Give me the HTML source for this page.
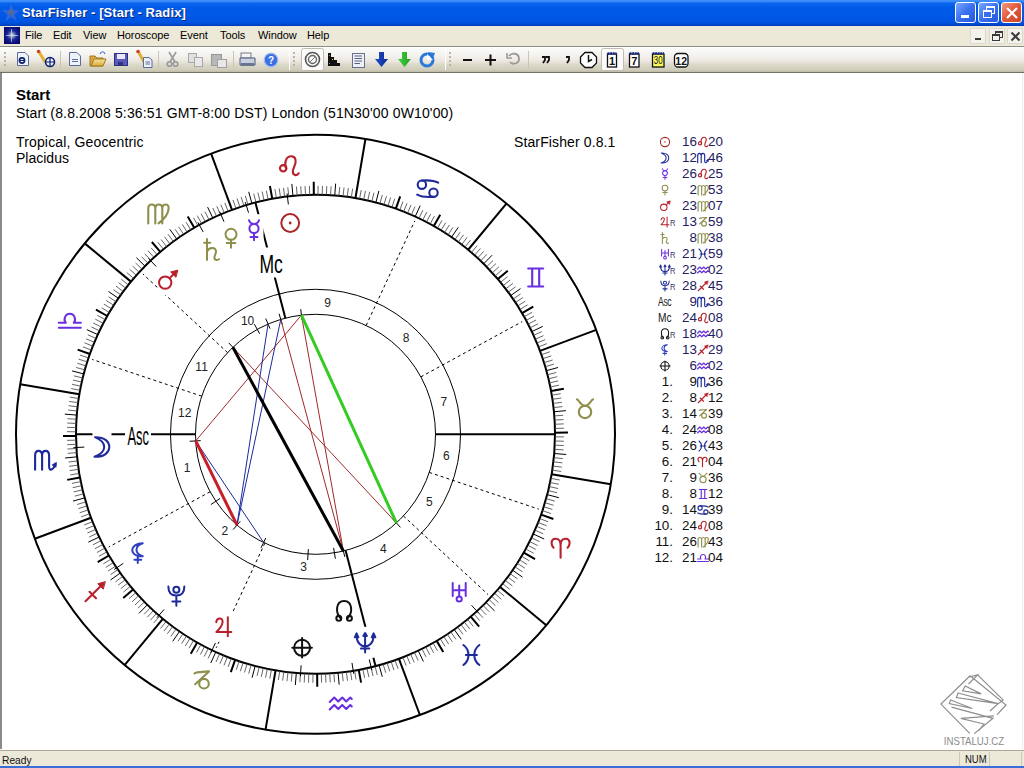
<!DOCTYPE html>
<html><head><meta charset="utf-8">
<style>
*{margin:0;padding:0;box-sizing:border-box}
html,body{width:1024px;height:768px;overflow:hidden;background:#fff;font-family:"Liberation Sans",sans-serif}
.abs{position:absolute}
#title{position:absolute;left:0;top:0;width:1024px;height:26px;background:linear-gradient(#3d8ef8 0%,#3d8ef8 5%,#0a64ee 12%,#005ae8 30%,#0058e6 60%,#0055e2 85%,#0044c8 96%,#0038b0 100%)}
#title .tx{position:absolute;left:22px;top:5px;color:#fff;font-weight:bold;font-size:13px;letter-spacing:0.1px;text-shadow:1px 1px 0 #0a2a80}
.tb{position:absolute;top:2px;width:21px;height:21px;border:1px solid #fff;border-radius:3px;background:linear-gradient(135deg,#7aa8ff,#3a70f0 50%,#2458e0)}
.tb.cl{background:linear-gradient(135deg,#f49a78,#e0583a 50%,#c84828)}
#menu{position:absolute;left:0;top:26px;width:1024px;height:21px;background:#ece9d8;border-bottom:1px solid #fff}
#mline{position:absolute;left:0;top:46px;width:1024px;height:1px;background:#8e8d82}
#menu .m{position:absolute;top:3px;font-size:11px;letter-spacing:-0.1px;color:#000}
#menu .mb{position:absolute;top:1.5px;width:16px;height:16px;background:#f3f2ec;border:1px solid #dcd9cc;border-radius:1px}
#tool{position:absolute;left:0;top:47px;width:1024px;height:26px;border-top:1px solid #fff;border-bottom:1px solid #72725f;background:linear-gradient(#fbfbf9 0%,#f4f3ef 30%,#ece6e0 55%,#d9d7c6 72%,#cfccba 92%,#bdbaa8 100%)}
#client{position:absolute;left:0;top:73px;width:1024px;height:676px;background:#fff;border-left:2px solid #8a8a8a}
#status{position:absolute;left:0;top:750px;width:1024px;height:16px;background:#ece9d8;border-top:1px solid #aca899}
#status .s{position:absolute;top:2px;font-size:11px;line-height:13px;color:#111}
#bottom{position:absolute;left:0;top:766px;width:1024px;height:2px;background:#3a6fd8}
.t{position:absolute;font-size:14px;line-height:16px;white-space:nowrap;color:#000}
.num{color:#1e2060;font-size:13.4px}
.hn{color:#111;font-size:13.4px}
.g{position:absolute;overflow:visible}
.sep{position:absolute;top:5px;width:2px;height:18px;border-left:1px solid #c5c2b2;border-right:1px solid #fff}
.grip{position:absolute;top:5px;width:3px;height:17px;background:repeating-linear-gradient(#c5c2b2 0 2px,transparent 2px 4px)}
</style></head><body>
<div id="title">
 <svg class="abs" style="left:1px;top:2px" width="20" height="20"><path d="M10,1.5 L12.2,8 L19,8.3 L13.6,12.4 L15.6,19 L10,15 L4.4,19 L6.4,12.4 L1,8.3 L7.8,8 Z" fill="#3a6ad8" opacity="0.8"/><circle cx="10" cy="10.5" r="3" fill="#5a6a90" opacity="0.8"/></svg>
 <div class="tx">StarFisher - [Start - Radix]</div>
 <div class="tb" style="left:955px"><div class="abs" style="left:5px;top:12px;width:8px;height:3px;background:#fff"></div></div>
 <div class="tb" style="left:978px"><div class="abs" style="left:7px;top:3px;width:9px;height:8px;border:1px solid #fff;border-top-width:2px"></div><div class="abs" style="left:4px;top:7px;width:9px;height:8px;border:1px solid #fff;border-top-width:2px;background:#3a6ef0"></div></div>
 <div class="tb cl" style="left:1001px"><svg class="abs" style="left:3px;top:3px" width="14" height="14"><path d="M2,2L12,12M12,2L2,12" stroke="#fff" stroke-width="2.2"/></svg></div>
</div>
<div id="menu">
 <div class="abs" style="left:4px;top:1px;width:16px;height:17px;background:radial-gradient(circle at 50% 48%,#fff 0,#9ab 12%,#1a2a98 40%,#0a0a70 75%)"><div class="abs" style="left:7px;top:2px;width:1px;height:13px;background:rgba(200,220,255,0.7)"></div><div class="abs" style="left:2px;top:8px;width:12px;height:1px;background:rgba(200,220,255,0.7)"></div></div>
 <div class="m" style="left:25px">File</div>
 <div class="m" style="left:53px">Edit</div>
 <div class="m" style="left:83px">View</div>
 <div class="m" style="left:117px">Horoscope</div>
 <div class="m" style="left:180px">Event</div>
 <div class="m" style="left:220px">Tools</div>
 <div class="m" style="left:258px">Window</div>
 <div class="m" style="left:307px">Help</div>
 <div class="mb" style="left:970px"><div class="abs" style="left:4px;top:9px;width:6px;height:2px;background:#3a3a3a"></div></div>
 <div class="mb" style="left:988.5px"><div class="abs" style="left:5px;top:2px;width:8px;height:7px;border:1px solid #3a3a3a;border-top-width:2px"></div><div class="abs" style="left:2px;top:5px;width:8px;height:7px;border:1px solid #3a3a3a;border-top-width:2px;background:#f3f2ec"></div></div>
 <div class="mb" style="left:1006.5px"><svg class="abs" style="left:2px;top:2px" width="11" height="11"><path d="M1.5,1.5L9.5,9.5M9.5,1.5L1.5,9.5" stroke="#3a3a3a" stroke-width="2"/></svg></div>
</div>
<div id="mline"></div>
<div id="tool">
<svg class="abs" style="left:0;top:-2px" width="1024" height="26">
<defs>
<linearGradient id="fold" x1="0" y1="0" x2="0" y2="1"><stop offset="0" stop-color="#fbe7a0"/><stop offset="1" stop-color="#d9a83a"/></linearGradient>
<linearGradient id="arrB" x1="0" y1="0" x2="1" y2="0"><stop offset="0" stop-color="#2050c8"/><stop offset="1" stop-color="#0a2a98"/></linearGradient>
<linearGradient id="arrG" x1="0" y1="0" x2="1" y2="0"><stop offset="0" stop-color="#40d040"/><stop offset="1" stop-color="#20a020"/></linearGradient>
</defs>
<!-- grips -->
<g fill="#b8b5a5"><rect x="4" y="6" width="2" height="2"/><rect x="4" y="10" width="2" height="2"/><rect x="4" y="14" width="2" height="2"/><rect x="4" y="18" width="2" height="2"/></g>
<g fill="#b8b5a5"><rect x="293" y="6" width="2" height="2"/><rect x="293" y="10" width="2" height="2"/><rect x="293" y="14" width="2" height="2"/><rect x="293" y="18" width="2" height="2"/></g>
<g fill="#b8b5a5"><rect x="449" y="6" width="2" height="2"/><rect x="449" y="10" width="2" height="2"/><rect x="449" y="14" width="2" height="2"/><rect x="449" y="18" width="2" height="2"/></g>
<line x1="289.5" y1="3" x2="289.5" y2="24" stroke="#fff"/>
<line x1="445.5" y1="3" x2="445.5" y2="24" stroke="#fff"/>
<!-- separators -->
<g stroke="#c8c5b5"><line x1="60.5" y1="5" x2="60.5" y2="22"/><line x1="158.5" y1="5" x2="158.5" y2="22"/><line x1="233.5" y1="5" x2="233.5" y2="22"/><line x1="528.5" y1="5" x2="528.5" y2="22"/></g>
<!-- icon1 new chart doc -->
<path d="M17.5,6.5 H25 L28.5,10 V19.5 H17.5 Z" fill="#eef2fb" stroke="#5a6a9a"/>
<circle cx="22" cy="14.5" r="2.6" fill="none" stroke="#102070" stroke-width="1.6"/><line x1="19.5" y1="14.5" x2="24.5" y2="14.5" stroke="#102070"/>
<!-- icon2 pencil + globe -->
<line x1="38.5" y1="5" x2="45" y2="16" stroke="#e0b030" stroke-width="3"/><circle cx="38.5" cy="5.5" r="1.8" fill="#d04030"/>
<circle cx="50" cy="16" r="4.5" fill="#e8eef8" stroke="#102070" stroke-width="1.6"/><path d="M45.5,16 H54.5 M50,11.5 V20.5" stroke="#102070" stroke-width="1.2"/>
<!-- icon3 doc -->
<path d="M69.5,6.5 H77 L80.5,10 V19.5 H69.5 Z" fill="#eef2fb" stroke="#5a6a9a"/><path d="M72,13.5 H78 M72,15.5 H78" stroke="#5a6a9a"/>
<!-- folder -->
<path d="M90,10 H95 L97,12 H103 V20 H90 Z" fill="#d8a840" stroke="#a07820"/><path d="M91,20 L94,13 H106 L103,20 Z" fill="url(#fold)" stroke="#a07820"/><path d="M100,8 C101,5 104,5 105,8" fill="none" stroke="#4a7ac8" stroke-width="1.2"/>
<!-- floppy -->
<rect x="114.5" y="7.5" width="13" height="12" fill="#5a5ab8" stroke="#303080"/><rect x="117" y="8" width="8" height="5" fill="#e8e8f8"/><rect x="118" y="16" width="5" height="3" fill="#303080"/>
<!-- pencil doc -->
<line x1="138" y1="5" x2="144" y2="16" stroke="#e0b030" stroke-width="3"/><circle cx="138" cy="5.5" r="1.8" fill="#d04030"/>
<path d="M143.5,11.5 H149 L152,14 V21.5 H143.5 Z" fill="#eef2fb" stroke="#5a6a9a"/><path d="M145.5,16 H150 M145.5,18 H150" stroke="#5a6a9a"/>
<!-- scissors grey -->
<path d="M169,6 L175,16 M176,6 L170,16" stroke="#a0a0a0" stroke-width="1.8"/><circle cx="169.5" cy="18" r="2.3" fill="none" stroke="#9a9a9a" stroke-width="1.6"/><circle cx="175.5" cy="18" r="2.3" fill="none" stroke="#9a9a9a" stroke-width="1.6"/>
<!-- copy -->
<rect x="188.5" y="7.5" width="8" height="9" fill="#e0e0e0" stroke="#a8a8a8"/><rect x="194.5" y="11.5" width="8" height="9" fill="#e8e8e8" stroke="#a8a8a8"/>
<!-- paste -->
<rect x="211.5" y="8.5" width="10" height="11" fill="#b8b8b8" stroke="#989898"/><rect x="217.5" y="13.5" width="9" height="8" fill="#e8e8e8" stroke="#a0a0a0"/>
<!-- printer -->
<rect x="241" y="7" width="10" height="5" fill="#f4f4f4" stroke="#707a90"/><path d="M240,12 H255 V19 H240 Z" fill="#c8d0e0" stroke="#505a78"/><rect x="241" y="17" width="13" height="3" fill="#6a7490"/>
<!-- help -->
<circle cx="271" cy="14" r="6.8" fill="#3a70e0" stroke="#a8c0f0" stroke-width="1.2"/><text x="271" y="18" text-anchor="middle" font-family="Liberation Sans" font-weight="bold" font-size="10" fill="#fff">?</text>
<!-- pressed radix -->
<rect x="301.5" y="2.5" width="22" height="22" rx="2" fill="#fbfbfb" stroke="#c0bdb0"/>
<circle cx="312.5" cy="13.5" r="7" fill="none" stroke="#555" stroke-width="1.6"/><circle cx="312.5" cy="13.5" r="4" fill="none" stroke="#666" stroke-width="1.4"/><line x1="310" y1="16" x2="315" y2="11" stroke="#777"/>
<!-- bar chart -->
<g><rect x="328" y="7" width="3" height="13" fill="#101010"/><rect x="331" y="11" width="3" height="9" fill="#101010"/><rect x="334" y="14" width="3" height="6" fill="#101010"/><rect x="337" y="17" width="3" height="3" fill="#101010"/><rect x="329" y="9" width="1" height="1" fill="#4a4"/><rect x="332" y="13" width="1" height="1" fill="#ee4"/><rect x="329" y="17" width="1" height="1" fill="#4ae"/></g>
<!-- doc lines -->
<rect x="352.5" y="7.5" width="12" height="14" fill="#eef0f8" stroke="#6a7090"/><path d="M354.5,10 H362 M354.5,12.5 H362 M354.5,15 H362 M354.5,17.5 H360" stroke="#5a6080"/>
<!-- arrows -->
<path d="M379,6 H384 V13 H388 L381.5,21 L375,13 H379 Z" fill="url(#arrB)"/>
<path d="M402,6 H407 V13 H411 L404.5,21 L398,13 H402 Z" fill="url(#arrG)"/>
<!-- refresh -->
<circle cx="427" cy="14" r="6" fill="none" stroke="#2a78d8" stroke-width="3"/><path d="M427,8 V14 H433" fill="#fff" stroke="none"/><path d="M428,6 L435,7 L433,12 Z" fill="#2a78d8"/>
<!-- minus plus -->
<rect x="463" y="13" width="9" height="2" fill="#111"/>
<rect x="485" y="13" width="11" height="2" fill="#111"/><rect x="489.5" y="8.5" width="2" height="11" fill="#111"/>
<!-- undo grey -->
<path d="M509,10 C512,6 519,7 519,13 C519,18 512,19 510,16" fill="none" stroke="#9a9a9a" stroke-width="1.8"/><path d="M507,7 V12 H512" fill="none" stroke="#9a9a9a" stroke-width="1.6"/>
<!-- quotes -->
<path d="M542,11 H545 V14 L543,17 M546,11 H549 V14 L547,17" fill="none" stroke="#111" stroke-width="1.8"/>
<path d="M566,11 H569 V14 L567,17" fill="none" stroke="#111" stroke-width="1.8"/>
<!-- clock -->
<path d="M585,6.5 H592 L596.5,11 V17 L592,21.5 H585 L580.5,17 V11 Z" fill="#fff" stroke="#111" stroke-width="1.3"/><path d="M588.5,9 V15.5 L592,13.5" fill="none" stroke="#111" stroke-width="1.5"/>
<!-- pressed 1 -->
<rect x="601.5" y="2.5" width="22" height="22" rx="2" fill="#fbfbfb" stroke="#c0bdb0"/>
<g transform="translate(0,-0.5)">
<rect x="607.5" y="8.5" width="9" height="13" fill="#fff" stroke="#111" stroke-width="1.3"/><path d="M607.5,8 H616.5" stroke="#1a2a8a" stroke-width="2.5" stroke-dasharray="2,0.6"/><text x="612" y="19.5" text-anchor="middle" font-family="Liberation Sans" font-weight="bold" font-size="11" fill="#111">1</text>
<rect x="629.5" y="8.5" width="9.5" height="13" fill="#fff" stroke="#111" stroke-width="1.3"/><path d="M629.5,8 H639" stroke="#1a2a8a" stroke-width="2.5" stroke-dasharray="2,0.6"/><text x="634.3" y="19.5" text-anchor="middle" font-family="Liberation Sans" font-weight="bold" font-size="11" fill="#111">7</text>
<rect x="652.5" y="8.5" width="11.5" height="13" fill="#f8f860" stroke="#111" stroke-width="1.3"/><path d="M652.5,8 H664" stroke="#1a2a8a" stroke-width="2.5" stroke-dasharray="2,0.6"/><text x="658.3" y="19" text-anchor="middle" font-family="Liberation Sans" font-size="10" fill="#111" transform="translate(658.3,0) scale(0.8,1) translate(-658.3,0)">30</text>
<rect x="674.5" y="8" width="13.5" height="13.5" rx="3.5" fill="#fff" stroke="#111" stroke-width="1.3"/><text x="681.2" y="19" text-anchor="middle" font-family="Liberation Sans" font-weight="bold" font-size="10.5" fill="#111">12</text>
</g>
</svg>

</div>
<div id="client"></div><div class="abs" style="left:1022px;top:73px;width:1px;height:676px;background:#eeeeee"></div>
<div class="t" style="left:16px;top:87px;font-weight:bold;font-size:15px">Start</div>
<div class="t" style="left:16px;top:105px;letter-spacing:0.15px">Start (8.8.2008 5:36:51 GMT-8:00 DST) London (51N30'00 0W10'00)</div>
<div class="t" style="left:16px;top:134px;letter-spacing:0.15px">Tropical, Geocentric</div>
<div class="t" style="left:16px;top:150px">Placidus</div>
<div class="t" style="left:514px;top:134px;letter-spacing:0.12px">StarFisher 0.8.1</div>
<svg width="1024" height="768" viewBox="0 0 1024 768" style="position:absolute;left:0;top:0">
<circle cx="315.5" cy="434.3" r="299.5" fill="none" stroke="#000" stroke-width="2"/>
<circle cx="315.5" cy="434.3" r="239.5" fill="none" stroke="#000" stroke-width="2"/>
<circle cx="315.5" cy="434.3" r="145.0" fill="none" stroke="#000" stroke-width="1"/>
<circle cx="315.5" cy="434.3" r="120.0" fill="none" stroke="#000" stroke-width="1"/>
<path d="M502.67,583.72L509.71,589.33M505.25,580.43L512.38,585.92M507.77,577.10L515.00,582.46M510.24,573.72L517.56,578.96M514.98,566.84L522.48,571.82M517.27,563.34L524.85,568.18M519.49,559.79L527.15,564.51M521.65,556.22L529.39,560.80M525.78,548.95L533.68,553.25M527.75,545.26L535.72,549.43M529.65,541.54L537.70,545.57M531.49,537.78L539.61,541.67M534.97,530.18L543.22,533.79M536.61,526.34L544.92,529.80M538.18,522.47L546.55,525.78M539.69,518.57L548.11,521.73M542.49,510.69L551.02,513.56M543.79,506.72L552.37,509.44M545.02,502.72L553.64,505.29M546.18,498.71L554.85,501.13M548.28,490.62L557.03,492.73M549.23,486.55L558.02,488.51M550.11,482.46L558.92,484.27M550.91,478.36L559.76,480.01M552.31,470.11L561.21,471.46M552.90,465.98L561.82,467.17M553.41,461.83L562.35,462.86M553.86,457.67L562.81,458.55M554.53,449.34L563.51,449.90M554.75,445.16L563.74,445.57M554.91,440.99L563.90,441.24M554.99,436.81L563.99,436.90M554.93,428.45L563.93,428.23M554.79,424.27L563.78,423.89M554.58,420.10L563.56,419.56M554.29,415.93L563.27,415.24M553.51,407.60L562.45,406.60M553.01,403.45L561.93,402.29M552.43,399.31L561.33,398.00M551.78,395.18L560.66,393.71M550.27,386.96L559.10,385.18M549.41,382.87L558.20,380.94M548.48,378.80L557.23,376.71M547.48,374.74L556.19,372.50M545.26,366.68L553.89,364.14M544.04,362.68L552.63,359.99M542.76,358.70L551.30,355.86M541.40,354.75L549.89,351.76M538.49,346.91L546.87,343.63M536.93,343.03L545.25,339.60M535.30,339.18L543.56,335.61M533.61,335.36L541.80,331.64M530.02,327.81L538.08,323.81M528.13,324.08L536.12,319.94M526.18,320.39L534.09,316.11M524.16,316.73L532.00,312.31M519.93,309.52L527.61,304.83M517.72,305.97L525.32,301.15M515.45,302.46L522.96,297.51M513.11,298.99L520.54,293.91M508.27,292.18L515.52,286.84M505.76,288.83L512.91,283.37M503.19,285.54L510.25,279.94M500.57,282.28L507.52,276.57M495.15,275.92L501.90,269.96M492.36,272.80L499.01,266.74M489.51,269.74L496.05,263.56M486.62,266.73L493.05,260.43M480.66,260.86L486.87,254.34M477.61,258.00L483.70,251.38M474.51,255.20L480.49,248.47M471.36,252.45L477.22,245.62M464.92,247.13L470.53,240.09M461.63,244.55L467.12,237.42M458.30,242.03L463.66,234.80M454.92,239.56L460.16,232.24M448.04,234.82L453.02,227.32M444.54,232.53L449.38,224.95M440.99,230.31L445.71,222.65M437.42,228.15L442.00,220.41M430.15,224.02L434.45,216.12M426.46,222.05L430.63,214.08M422.74,220.15L426.77,212.10M418.98,218.31L422.87,210.19M411.38,214.83L414.99,206.58M407.54,213.19L411.00,204.88M403.67,211.62L406.98,203.25M399.77,210.11L402.93,201.69M391.89,207.31L394.76,198.78M387.92,206.01L390.64,197.43M383.92,204.78L386.49,196.16M379.91,203.62L382.33,194.95M371.82,201.52L373.93,192.77M367.75,200.57L369.71,191.78M363.66,199.69L365.47,190.88M359.56,198.89L361.21,190.04M351.31,197.49L352.66,188.59M347.18,196.90L348.37,187.98M343.03,196.39L344.06,187.45M338.87,195.94L339.75,186.99M330.54,195.27L331.10,186.29M326.36,195.05L326.77,186.06M322.19,194.89L322.44,185.90M318.01,194.81L318.10,185.81M309.65,194.87L309.43,185.87M305.47,195.01L305.09,186.02M301.30,195.22L300.76,186.24M297.13,195.51L296.44,186.53M288.80,196.29L287.80,187.35M284.65,196.79L283.49,187.87M280.51,197.37L279.20,188.47M276.38,198.02L274.91,189.14M268.16,199.53L266.38,190.70M264.07,200.39L262.14,191.60M260.00,201.32L257.91,192.57M255.94,202.32L253.70,193.61M247.88,204.54L245.34,195.91M243.88,205.76L241.19,197.17M239.90,207.04L237.06,198.50M235.95,208.40L232.96,199.91M228.11,211.31L224.83,202.93M224.23,212.87L220.80,204.55M220.38,214.50L216.81,206.24M216.56,216.19L212.84,208.00M209.01,219.78L205.01,211.72M205.28,221.67L201.14,213.68M201.59,223.62L197.31,215.71M197.93,225.64L193.51,217.80M190.72,229.87L186.03,222.19M187.17,232.08L182.35,224.48M183.66,234.35L178.71,226.84M180.19,236.69L175.11,229.26M173.38,241.53L168.04,234.28M170.03,244.04L164.57,236.89M166.74,246.61L161.14,239.55M163.48,249.23L157.77,242.28M157.12,254.65L151.16,247.90M154.00,257.44L147.94,250.79M150.94,260.29L144.76,253.75M147.93,263.18L141.63,256.75M142.06,269.14L135.54,262.93M139.20,272.19L132.58,266.10M136.40,275.29L129.67,269.31M133.65,278.44L126.82,272.58M128.33,284.88L121.29,279.27M125.75,288.17L118.62,282.68M123.23,291.50L116.00,286.14M120.76,294.88L113.44,289.64M116.02,301.76L108.52,296.78M113.73,305.26L106.15,300.42M111.51,308.81L103.85,304.09M109.35,312.38L101.61,307.80M105.22,319.65L97.32,315.35M103.25,323.34L95.28,319.17M101.35,327.06L93.30,323.03M99.51,330.82L91.39,326.93M96.03,338.42L87.78,334.81M94.39,342.26L86.08,338.80M92.82,346.13L84.45,342.82M91.31,350.03L82.89,346.87M88.51,357.91L79.98,355.04M87.21,361.88L78.63,359.16M85.98,365.88L77.36,363.31M84.82,369.89L76.15,367.47M82.72,377.98L73.97,375.87M81.77,382.05L72.98,380.09M80.89,386.14L72.08,384.33M80.09,390.24L71.24,388.59M78.69,398.49L69.79,397.14M78.10,402.62L69.18,401.43M77.59,406.77L68.65,405.74M77.14,410.93L68.19,410.05M76.47,419.26L67.49,418.70M76.25,423.44L67.26,423.03M76.09,427.61L67.10,427.36M76.01,431.79L67.01,431.70M76.07,440.15L67.07,440.37M76.21,444.33L67.22,444.71M76.42,448.50L67.44,449.04M76.71,452.67L67.73,453.36M77.49,461.00L68.55,462.00M77.99,465.15L69.07,466.31M78.57,469.29L69.67,470.60M79.22,473.42L70.34,474.89M80.73,481.64L71.90,483.42M81.59,485.73L72.80,487.66M82.52,489.80L73.77,491.89M83.52,493.86L74.81,496.10M85.74,501.92L77.11,504.46M86.96,505.92L78.37,508.61M88.24,509.90L79.70,512.74M89.60,513.85L81.11,516.84M92.51,521.69L84.13,524.97M94.07,525.57L85.75,529.00M95.70,529.42L87.44,532.99M97.39,533.24L89.20,536.96M100.98,540.79L92.92,544.79M102.87,544.52L94.88,548.66M104.82,548.21L96.91,552.49M106.84,551.87L99.00,556.29M111.07,559.08L103.39,563.77M113.28,562.63L105.68,567.45M115.55,566.14L108.04,571.09M117.89,569.61L110.46,574.69M122.73,576.42L115.48,581.76M125.24,579.77L118.09,585.23M127.81,583.06L120.75,588.66M130.43,586.32L123.48,592.03M135.85,592.68L129.10,598.64M138.64,595.80L131.99,601.86M141.49,598.86L134.95,605.04M144.38,601.87L137.95,608.17M150.34,607.74L144.13,614.26M153.39,610.60L147.30,617.22M156.49,613.40L150.51,620.13M159.64,616.15L153.78,622.98M166.08,621.47L160.47,628.51M169.37,624.05L163.88,631.18M172.70,626.57L167.34,633.80M176.08,629.04L170.84,636.36M182.96,633.78L177.98,641.28M186.46,636.07L181.62,643.65M190.01,638.29L185.29,645.95M193.58,640.45L189.00,648.19M200.85,644.58L196.55,652.48M204.54,646.55L200.37,654.52M208.26,648.45L204.23,656.50M212.02,650.29L208.13,658.41M219.62,653.77L216.01,662.02M223.46,655.41L220.00,663.72M227.33,656.98L224.02,665.35M231.23,658.49L228.07,666.91M239.11,661.29L236.24,669.82M243.08,662.59L240.36,671.17M247.08,663.82L244.51,672.44M251.09,664.98L248.67,673.65M259.18,667.08L257.07,675.83M263.25,668.03L261.29,676.82M267.34,668.91L265.53,677.72M271.44,669.71L269.79,678.56M279.69,671.11L278.34,680.01M283.82,671.70L282.63,680.62M287.97,672.21L286.94,681.15M292.13,672.66L291.25,681.61M300.46,673.33L299.90,682.31M304.64,673.55L304.23,682.54M308.81,673.71L308.56,682.70M312.99,673.79L312.90,682.79M321.35,673.73L321.57,682.73M325.53,673.59L325.91,682.58M329.70,673.38L330.24,682.36M333.87,673.09L334.56,682.07M342.20,672.31L343.20,681.25M346.35,671.81L347.51,680.73M350.49,671.23L351.80,680.13M354.62,670.58L356.09,679.46M362.84,669.07L364.62,677.90M366.93,668.21L368.86,677.00M371.00,667.28L373.09,676.03M375.06,666.28L377.30,674.99M383.12,664.06L385.66,672.69M387.12,662.84L389.81,671.43M391.10,661.56L393.94,670.10M395.05,660.20L398.04,668.69M402.89,657.29L406.17,665.67M406.77,655.73L410.20,664.05M410.62,654.10L414.19,662.36M414.44,652.41L418.16,660.60M421.99,648.82L425.99,656.88M425.72,646.93L429.86,654.92M429.41,644.98L433.69,652.89M433.07,642.96L437.49,650.80M440.28,638.73L444.97,646.41M443.83,636.52L448.65,644.12M447.34,634.25L452.29,641.76M450.81,631.91L455.89,639.34M457.62,627.07L462.96,634.32M460.97,624.56L466.43,631.71M464.26,621.99L469.86,629.05M467.52,619.37L473.23,626.32M473.88,613.95L479.84,620.70M477.00,611.16L483.06,617.81M480.06,608.31L486.24,614.85M483.07,605.42L489.37,611.85M488.94,599.46L495.46,605.67M491.80,596.41L498.42,602.50M494.60,593.31L501.33,599.29M497.35,590.16L504.18,596.02" stroke="#4a4a4a" stroke-width="0.85"/>
<path d="M512.64,570.30L522.52,577.11M533.26,534.00L544.17,538.99M547.27,494.67L558.88,497.70M554.23,453.51L566.19,454.47M553.94,411.76L565.88,410.63M546.40,370.70L557.97,367.51M531.85,331.57L542.69,326.42M510.72,295.56L520.50,288.61M483.67,263.77L492.09,255.23M451.50,237.16L458.31,227.28M415.20,216.54L420.19,205.63M375.87,202.53L378.90,190.92M334.71,195.57L335.67,183.61M292.96,195.86L291.83,183.92M251.90,203.40L248.71,191.83M212.77,217.95L207.62,207.11M176.76,239.08L169.81,229.30M144.97,266.13L136.43,257.71M118.36,298.30L108.48,291.49M97.74,334.60L86.83,329.61M83.73,373.93L72.12,370.90M76.77,415.09L64.81,414.13M77.06,456.84L65.12,457.97M84.60,497.90L73.03,501.09M99.15,537.03L88.31,542.18M120.28,573.04L110.50,579.99M147.33,604.83L138.91,613.37M179.50,631.44L172.69,641.32M215.80,652.06L210.81,662.97M255.13,666.07L252.10,677.68M296.29,673.03L295.33,684.99M338.04,672.74L339.17,684.68M379.10,665.20L382.29,676.77M418.23,650.65L423.38,661.49M454.24,629.52L461.19,639.30M486.03,602.47L494.57,610.89" stroke="#000" stroke-width="1"/>
<path d="M523.74,552.60L535.05,559.02M541.12,514.64L553.37,519.00M554.99,432.63L567.99,432.54M551.07,391.07L563.85,388.72M522.07,313.10L533.28,306.53M497.89,279.08L507.79,270.65M433.80,226.06L440.22,214.75M395.84,208.68L400.20,196.43M313.83,194.81L313.74,181.81M272.27,198.73L269.92,185.95M194.30,227.73L187.73,216.52M160.28,251.91L151.85,242.01M107.26,316.00L95.95,309.58M89.88,353.96L77.63,349.60M76.01,435.97L63.01,436.06M79.93,477.53L67.15,479.88M108.93,555.50L97.72,562.07M133.11,589.52L123.21,597.95M197.20,642.54L190.78,653.85M235.16,659.92L230.80,672.17M317.17,673.79L317.26,686.79M358.73,669.87L361.08,682.65M436.70,640.87L443.27,652.08M470.72,616.69L479.15,626.59" stroke="#000" stroke-width="2"/>
<line x1="500.04" y1="586.96" x2="546.27" y2="625.21" stroke="#000" stroke-width="2"/>
<line x1="551.65" y1="474.24" x2="610.81" y2="484.25" stroke="#000" stroke-width="2"/>
<line x1="539.98" y1="350.82" x2="596.22" y2="329.90" stroke="#000" stroke-width="2"/>
<line x1="468.16" y1="249.76" x2="506.41" y2="203.53" stroke="#000" stroke-width="2"/>
<line x1="355.44" y1="198.15" x2="365.45" y2="138.99" stroke="#000" stroke-width="2"/>
<line x1="232.02" y1="209.82" x2="211.10" y2="153.58" stroke="#000" stroke-width="2"/>
<line x1="130.96" y1="281.64" x2="84.73" y2="243.39" stroke="#000" stroke-width="2"/>
<line x1="79.35" y1="394.36" x2="20.19" y2="384.35" stroke="#000" stroke-width="2"/>
<line x1="91.02" y1="517.78" x2="34.78" y2="538.70" stroke="#000" stroke-width="2"/>
<line x1="162.84" y1="618.84" x2="124.59" y2="665.07" stroke="#000" stroke-width="2"/>
<line x1="275.56" y1="670.45" x2="265.55" y2="729.61" stroke="#000" stroke-width="2"/>
<line x1="398.98" y1="658.78" x2="419.90" y2="715.02" stroke="#000" stroke-width="2"/>
<g transform="translate(561.60,548.20) scale(1.0)" style="color:#b8202c" stroke="#b8202c" fill="#b8202c" stroke-width="2.1" stroke-linecap="round" stroke-linejoin="round"><path d="M-1,9.5 V-3 C-1,-7 -3,-9.5 -6,-9.5 C-8.5,-9.5 -10,-7.5 -10,-5 C-10,-3 -9,-1.5 -8,-0.5 M-1,-3 C-1,-7 1,-9.5 4,-9.5 C6.5,-9.5 8,-7.5 8,-5 C8,-3 7,-1.5 6,-0.5" fill="none"/></g>
<g transform="translate(585.00,408.90) scale(1.0)" style="color:#8f8f4c" stroke="#8f8f4c" fill="#8f8f4c" stroke-width="2.1" stroke-linecap="round" stroke-linejoin="round"><circle cx="0" cy="3" r="6.2" fill="none"/><path d="M-8,-9.5 C-6,-9.5 -5,-3.2 0,-3.2 C5,-3.2 6,-9.5 8,-9.5" fill="none"/></g>
<g transform="translate(535.70,277.50) scale(1.0)" style="color:#6a2fe0" stroke="#6a2fe0" fill="#6a2fe0" stroke-width="2.1" stroke-linecap="round" stroke-linejoin="round"><path d="M-7.5,-9 H7.5 M-7.5,9 H7.5 M-3.5,-9 V9 M3.5,-9 V9" fill="none"/></g>
<g transform="translate(427.70,188.70) scale(1.0)" style="color:#1e2a9a" stroke="#1e2a9a" fill="#1e2a9a" stroke-width="2.1" stroke-linecap="round" stroke-linejoin="round"><path d="M-5.8,-8.2 C0,-8.6 6,-8.6 10.5,-6 M5.8,8.2 C0,8.6 -6,8.6 -10.5,6" fill="none"/><circle cx="-5.8" cy="-4" r="4.2" fill="none"/><circle cx="5.8" cy="4" r="4.2" fill="none"/></g>
<g transform="translate(289.20,165.80) scale(1.0)" style="color:#b8202c" stroke="#b8202c" fill="#b8202c" stroke-width="2.1" stroke-linecap="round" stroke-linejoin="round"><circle cx="-6" cy="2.5" r="3.2" fill="none"/><path d="M-3,2.8 C-5.5,-3 -3,-9.5 2,-9.5 C7,-9.5 7.5,-4 5,1 C3,5 3,8.5 6,9.3 C8,9.7 9,8.5 9.5,7.5" fill="none"/></g>
<g transform="translate(158.00,213.50) scale(1.0)" style="color:#8f8f4c" stroke="#8f8f4c" fill="#8f8f4c" stroke-width="2.1" stroke-linecap="round" stroke-linejoin="round"><path d="M-9.75,9.9 V-5 C-9.75,-8 -8,-9 -6.2,-9 C-4.5,-9 -2.7,-8 -2.7,-5 V9.9 M-2.7,-5 C-2.7,-8 -1,-9 0.8,-9 C2.5,-9 4.3,-8 4.3,-5 V9.9 M4.3,-5 C4.3,-8 6,-9 8,-9 C10,-9 11,-7 10.5,-4 C10,0 7,5 0.5,9.9" fill="none"/></g>
<g transform="translate(69.80,320.70) scale(1.0)" style="color:#6a2fe0" stroke="#6a2fe0" fill="#6a2fe0" stroke-width="2.1" stroke-linecap="round" stroke-linejoin="round"><path d="M-11,7 H11 M-11,2 H-4 C-6.5,-0.5 -5,-7 0,-7 C5,-7 6.5,-0.5 4,2 H11" fill="none"/></g>
<g transform="translate(45.70,460.20) scale(1.0)" style="color:#1e2a9a" stroke="#1e2a9a" fill="#1e2a9a" stroke-width="2.1" stroke-linecap="round" stroke-linejoin="round"><path d="M-10.6,9.5 V-4.5 C-10.6,-8 -9,-9.3 -7.1,-9.3 C-5.2,-9.3 -3.6,-8 -3.6,-4.5 V9.5 M-3.6,-4.5 C-3.6,-8 -2,-9.3 -0.1,-9.3 C1.8,-9.3 3.4,-8 3.4,-4.5 V6 C3.4,9.5 5,10 6.5,9 C8,8 9,6 9.7,4" fill="none"/><path d="M10.5,2.5 L6.8,4.8 L10.2,6.8 Z" stroke-width="1.2"/></g>
<g transform="translate(95.00,591.75) scale(1.0)" style="color:#b8202c" stroke="#b8202c" fill="#b8202c" stroke-width="2.1" stroke-linecap="round" stroke-linejoin="round"><path d="M-9.5,9.5 L8.5,-8.5 M-5.5,0 L1,6.5" fill="none"/><path d="M10,-10 L2.8,-8 L8,-2.8 Z" stroke-width="1"/></g>
<g transform="translate(202.00,680.40) scale(1.0)" style="color:#8f8f4c" stroke="#8f8f4c" fill="#8f8f4c" stroke-width="2.1" stroke-linecap="round" stroke-linejoin="round"><path d="M-7.5,-7 C-5,-8.5 -3,-8 0,-8.5 L7,-9 L-6.8,3.8" fill="none"/><circle cx="2" cy="3.3" r="4.8" fill="none"/></g>
<g transform="translate(340.75,703.50) scale(1.0)" style="color:#6a2fe0" stroke="#6a2fe0" fill="#6a2fe0" stroke-width="2.1" stroke-linecap="round" stroke-linejoin="round"><path d="M-11,-1.5 L-6.5,-6 L-2.5,-2 L1.5,-6 L5.5,-2 L9.5,-6 L11,-4.5 M-11,6 L-6.5,1.5 L-2.5,5.5 L1.5,1.5 L5.5,5.5 L9.5,1.5 L11,3" fill="none"/></g>
<g transform="translate(471.40,655.00) scale(1.0)" style="color:#1e2a9a" stroke="#1e2a9a" fill="#1e2a9a" stroke-width="2.1" stroke-linecap="round" stroke-linejoin="round"><path d="M-8,-10 C-1.2,-5 -1.2,5 -8,10 M8,-10 C1.2,-5 1.2,5 8,10 M-5.5,0 H5.5" fill="none"/></g>
<line x1="210.14" y1="491.74" x2="108.74" y2="547.03" stroke="#000" stroke-width="1" stroke-dasharray="3,3"/>
<line x1="264.88" y1="543.10" x2="216.16" y2="647.82" stroke="#000" stroke-width="1" stroke-dasharray="3,3"/>
<line x1="403.43" y1="515.96" x2="488.06" y2="594.56" stroke="#000" stroke-width="1" stroke-dasharray="3,3"/>
<line x1="429.28" y1="472.44" x2="538.79" y2="509.16" stroke="#000" stroke-width="1" stroke-dasharray="3,3"/>
<line x1="420.86" y1="376.86" x2="522.26" y2="321.57" stroke="#000" stroke-width="1" stroke-dasharray="3,3"/>
<line x1="366.12" y1="325.50" x2="414.84" y2="220.78" stroke="#000" stroke-width="1" stroke-dasharray="3,3"/>
<line x1="227.57" y1="352.64" x2="142.94" y2="274.04" stroke="#000" stroke-width="1" stroke-dasharray="3,3"/>
<line x1="201.72" y1="396.16" x2="92.21" y2="359.44" stroke="#000" stroke-width="1" stroke-dasharray="3,3"/>
<line x1="345.61" y1="550.46" x2="375.60" y2="666.14" stroke="#000" stroke-width="2"/>
<line x1="435.50" y1="434.30" x2="555.00" y2="434.30" stroke="#000" stroke-width="2"/>
<line x1="195.50" y1="434.30" x2="76.00" y2="434.30" stroke="#000" stroke-width="2"/>
<line x1="285.39" y1="318.14" x2="255.40" y2="202.46" stroke="#000" stroke-width="2"/>
<text x="187.11" y="471.53" text-anchor="middle" font-family="Liberation Sans, sans-serif" font-size="12" fill="#222">1</text>
<text x="224.84" y="535.43" text-anchor="middle" font-family="Liberation Sans, sans-serif" font-size="12" fill="#222">2</text>
<text x="303.47" y="570.75" text-anchor="middle" font-family="Liberation Sans, sans-serif" font-size="12" fill="#222">3</text>
<text x="383.40" y="552.58" text-anchor="middle" font-family="Liberation Sans, sans-serif" font-size="12" fill="#222">4</text>
<text x="429.42" y="506.46" text-anchor="middle" font-family="Liberation Sans, sans-serif" font-size="12" fill="#222">5</text>
<text x="446.27" y="460.14" text-anchor="middle" font-family="Liberation Sans, sans-serif" font-size="12" fill="#222">6</text>
<text x="443.89" y="406.07" text-anchor="middle" font-family="Liberation Sans, sans-serif" font-size="12" fill="#222">7</text>
<text x="406.16" y="342.17" text-anchor="middle" font-family="Liberation Sans, sans-serif" font-size="12" fill="#222">8</text>
<text x="327.53" y="306.85" text-anchor="middle" font-family="Liberation Sans, sans-serif" font-size="12" fill="#222">9</text>
<text x="247.60" y="325.02" text-anchor="middle" font-family="Liberation Sans, sans-serif" font-size="12" fill="#222">10</text>
<text x="201.58" y="371.14" text-anchor="middle" font-family="Liberation Sans, sans-serif" font-size="12" fill="#222">11</text>
<text x="184.73" y="417.46" text-anchor="middle" font-family="Liberation Sans, sans-serif" font-size="12" fill="#222">12</text>
<line x1="288.36" y1="204.40" x2="287.07" y2="193.47" stroke="#000" stroke-width="1"/>
<line x1="302.02" y1="320.09" x2="300.73" y2="309.17" stroke="#000" stroke-width="1"/>
<line x1="84.35" y1="447.09" x2="73.37" y2="447.70" stroke="#000" stroke-width="1"/>
<line x1="200.68" y1="440.65" x2="189.69" y2="441.26" stroke="#000" stroke-width="1"/>
<line x1="248.52" y1="212.70" x2="245.34" y2="202.17" stroke="#000" stroke-width="1"/>
<line x1="282.23" y1="324.22" x2="279.05" y2="313.69" stroke="#000" stroke-width="1"/>
<line x1="223.99" y1="221.65" x2="219.65" y2="211.55" stroke="#000" stroke-width="1"/>
<line x1="270.04" y1="328.67" x2="265.69" y2="318.56" stroke="#000" stroke-width="1"/>
<line x1="156.10" y1="266.42" x2="148.52" y2="258.45" stroke="#000" stroke-width="1"/>
<line x1="236.31" y1="350.90" x2="228.74" y2="342.93" stroke="#000" stroke-width="1"/>
<line x1="215.41" y1="643.05" x2="210.66" y2="652.96" stroke="#000" stroke-width="1"/>
<line x1="265.78" y1="538.00" x2="261.02" y2="547.92" stroke="#000" stroke-width="1"/>
<line x1="203.15" y1="231.89" x2="197.81" y2="222.27" stroke="#000" stroke-width="1"/>
<line x1="259.69" y1="333.75" x2="254.35" y2="324.13" stroke="#000" stroke-width="1"/>
<line x1="471.55" y1="605.30" x2="478.97" y2="613.42" stroke="#000" stroke-width="1"/>
<line x1="393.02" y1="519.24" x2="400.44" y2="527.37" stroke="#000" stroke-width="1"/>
<line x1="369.28" y1="659.47" x2="371.84" y2="670.17" stroke="#000" stroke-width="1"/>
<line x1="342.22" y1="546.15" x2="344.77" y2="556.85" stroke="#000" stroke-width="1"/>
<line x1="164.08" y1="609.41" x2="156.89" y2="617.73" stroke="#000" stroke-width="1"/>
<line x1="240.28" y1="521.29" x2="233.09" y2="529.61" stroke="#000" stroke-width="1"/>
<line x1="351.98" y1="662.91" x2="353.71" y2="673.77" stroke="#000" stroke-width="1"/>
<line x1="333.62" y1="547.86" x2="335.36" y2="558.73" stroke="#000" stroke-width="1"/>
<line x1="123.31" y1="563.36" x2="114.18" y2="569.49" stroke="#000" stroke-width="1"/>
<line x1="220.03" y1="498.41" x2="210.90" y2="504.55" stroke="#000" stroke-width="1"/>
<line x1="301.10" y1="665.35" x2="300.41" y2="676.33" stroke="#000" stroke-width="1"/>
<line x1="308.35" y1="549.08" x2="307.66" y2="560.06" stroke="#000" stroke-width="1"/>
<line x1="195.68" y1="440.93" x2="301.43" y2="315.13" stroke="#a0282c" stroke-width="1"/>
<line x1="232.87" y1="347.28" x2="396.39" y2="522.94" stroke="#a0282c" stroke-width="1"/>
<line x1="301.43" y1="315.13" x2="343.38" y2="551.02" stroke="#a0282c" stroke-width="1"/>
<line x1="280.78" y1="319.43" x2="343.38" y2="551.02" stroke="#a0282c" stroke-width="1"/>
<line x1="268.07" y1="324.07" x2="237.01" y2="525.07" stroke="#1a2a9a" stroke-width="1"/>
<line x1="280.78" y1="319.43" x2="237.01" y2="525.07" stroke="#1a2a9a" stroke-width="1"/>
<line x1="195.68" y1="440.93" x2="263.62" y2="542.50" stroke="#1a2a9a" stroke-width="1"/>
<line x1="195.68" y1="440.93" x2="237.01" y2="525.07" stroke="#c81e28" stroke-width="3"/>
<line x1="232.87" y1="347.28" x2="343.38" y2="551.02" stroke="#000" stroke-width="3"/>
<line x1="301.43" y1="315.13" x2="396.39" y2="522.94" stroke="#33cc22" stroke-width="3"/>
<rect x="280.70" y="207.00" width="19" height="31" fill="#fff"/>
<g transform="translate(290.20,223.00) scale(1.0)" style="color:#a82828" stroke="#a82828" fill="#a82828" stroke-width="2.0" stroke-linecap="round" stroke-linejoin="round"><circle cx="0" cy="0" r="8.9" fill="none"/><circle cx="0" cy="0" r="1.4" stroke="none" fill="currentColor"/></g>
<rect x="92.50" y="431.00" width="19" height="31" fill="#fff"/>
<g transform="translate(102.00,447.00) scale(1.0)" style="color:#1e2a9a" stroke="#1e2a9a" fill="#1e2a9a" stroke-width="2.0" stroke-linecap="round" stroke-linejoin="round"><path d="M-7,-9.8 C3,-10 7.3,-5 7.3,0 C7.3,5 3,10 -7.5,9.8 C-1.5,7.5 2.2,4 2.2,0 C2.2,-4 -1.5,-7.5 -7,-9.8 Z" fill="none"/></g>
<rect x="244.50" y="214.20" width="19" height="31" fill="#fff"/>
<g transform="translate(254.00,230.20) scale(1.0)" style="color:#6a2fe0" stroke="#6a2fe0" fill="#6a2fe0" stroke-width="2.0" stroke-linecap="round" stroke-linejoin="round"><circle cx="0" cy="-1.7" r="4.6" fill="none"/><path d="M-5,-10 C-4,-7 -2.5,-6.3 0,-6.3 C2.5,-6.3 4,-7 5,-10 M0,3 V10 M-3.5,6.8 H3.5" fill="none"/></g>
<rect x="221.50" y="222.00" width="19" height="31" fill="#fff"/>
<g transform="translate(231.00,238.00) scale(1.0)" style="color:#8f8f4c" stroke="#8f8f4c" fill="#8f8f4c" stroke-width="2.0" stroke-linecap="round" stroke-linejoin="round"><circle cx="0" cy="-3.7" r="5.5" fill="none"/><path d="M0,1.8 V9.8 M-4.3,5 H4.3" fill="none"/></g>
<rect x="158.00" y="264.00" width="19" height="31" fill="#fff"/>
<g transform="translate(167.50,280.00) scale(1.0)" style="color:#b8202c" stroke="#b8202c" fill="#b8202c" stroke-width="2.0" stroke-linecap="round" stroke-linejoin="round"><circle cx="-2.3" cy="2.6" r="6.2" fill="none"/><path d="M2.2,-1.9 L8.5,-8.2" fill="none"/><path d="M10,-9.8 L3.2,-8 L8.2,-3 Z" stroke-width="1"/></g>
<rect x="214.30" y="610.75" width="19" height="31" fill="#fff"/>
<g transform="translate(223.80,626.75) scale(1.0)" style="color:#b8202c" stroke="#b8202c" fill="#b8202c" stroke-width="2.0" stroke-linecap="round" stroke-linejoin="round"><path d="M-7.5,-4.5 C-7.5,-9 -1.2,-10 -1.2,-5.2 C-1.2,-1.5 -4.5,2.5 -7.5,5.2 H7.5 M4,-9.5 V9.5" fill="none"/></g>
<rect x="202.50" y="233.60" width="19" height="31" fill="#fff"/>
<g transform="translate(212.00,249.60) scale(1.0)" style="color:#8f8f4c" stroke="#8f8f4c" fill="#8f8f4c" stroke-width="2.0" stroke-linecap="round" stroke-linejoin="round"><path d="M-5,-10.5 V10.5 M-7.8,-6.8 H-1.8 M-5,2 C-3,-2.5 4,-3 4,2 C4,5 1.8,6.5 2.5,8.8 C3.2,11 6,10.5 7,9.5" fill="none"/></g>
<rect x="449.70" y="576.00" width="19" height="31" fill="#fff"/>
<g transform="translate(459.20,592.00) scale(1.0)" style="color:#6a2fe0" stroke="#6a2fe0" fill="#6a2fe0" stroke-width="2.0" stroke-linecap="round" stroke-linejoin="round"><path d="M-6.5,-9 V4 M6.5,-9 V4 M-6.5,-1.8 H6.5 M0,-6.5 V4.3" fill="none"/><circle cx="0" cy="7" r="2.6" fill="none"/></g>
<rect x="355.60" y="626.80" width="19" height="31" fill="#fff"/>
<g transform="translate(365.10,642.80) scale(1.0)" style="color:#1e2a9a" stroke="#1e2a9a" fill="#1e2a9a" stroke-width="2.0" stroke-linecap="round" stroke-linejoin="round"><path d="M-8.5,-7.5 C-8.5,0.5 -4,3.5 0,3.5 C4,3.5 8.5,0.5 8.5,-7.5 M0,-9 V9.8 M-4.2,5.8 H4.2 M-10.3,-5.5 L-8.5,-9.5 L-6.7,-5.5 M-1.8,-6.8 L0,-9.8 L1.8,-6.8 M6.7,-5.5 L8.5,-9.5 L10.3,-5.5" fill="none"/></g>
<rect x="166.85" y="580.00" width="19" height="31" fill="#fff"/>
<g transform="translate(176.35,596.00) scale(1.0)" style="color:#1e2a9a" stroke="#1e2a9a" fill="#1e2a9a" stroke-width="2.0" stroke-linecap="round" stroke-linejoin="round"><path d="M-8,-9.5 C-8,-3 -4.5,-0.5 0,-0.5 C4.5,-0.5 8,-3 8,-9.5 M0,-0.5 V9.8 M-4,5.5 H4" fill="none"/><circle cx="0" cy="-6.3" r="3" fill="none"/></g>
<rect x="334.60" y="594.90" width="19" height="31" fill="#fff"/>
<g transform="translate(344.10,610.90) scale(1.0)" style="color:#111" stroke="#111" fill="#111" stroke-width="2.0" stroke-linecap="round" stroke-linejoin="round"><path d="M-3.2,7.5 C-9,2 -8.5,-10 0,-10 C8.5,-10 9,2 3.2,7.5" fill="none"/><circle cx="-5.3" cy="7.3" r="2.5" fill="none"/><circle cx="5.3" cy="7.3" r="2.5" fill="none"/></g>
<rect x="128.75" y="537.25" width="19" height="31" fill="#fff"/>
<g transform="translate(138.25,553.25) scale(1.0)" style="color:#3040c0" stroke="#3040c0" fill="#3040c0" stroke-width="2.0" stroke-linecap="round" stroke-linejoin="round"><path d="M4.5,-10 C-2,-10 -6,-6.5 -6,-3.2 C-6,0.5 -2,3 4.5,3 C0,1.5 -1.8,-1 -1.8,-3.5 C-1.8,-6 0,-8.5 4.5,-10 Z M-0.5,3 V9.8 M-3.8,6.5 H3" fill="none"/></g>
<rect x="292.60" y="631.80" width="19" height="31" fill="#fff"/>
<g transform="translate(302.10,647.80) scale(1.0)" style="color:#111" stroke="#111" fill="#111" stroke-width="2.0" stroke-linecap="round" stroke-linejoin="round"><circle cx="0" cy="0" r="8" fill="none"/><path d="M-9.8,0 H9.8 M0,-9.8 V9.8" fill="none"/></g>
<rect x="125" y="424" width="26" height="26" fill="#fff"/>
<text x="0" y="0" font-family="Liberation Sans, sans-serif" font-size="25.3" fill="#000" transform="translate(127.4,444.8) scale(0.51,1)">Asc</text>
<rect x="258" y="247.5" width="26" height="30" fill="#fff"/>
<text x="0" y="0" font-family="Liberation Sans, sans-serif" font-size="26.6" fill="#000" transform="translate(259.5,272.5) scale(0.66,1)">Mc</text>
</svg>
<svg class="g" style="left:657px;top:134px" width="16" height="16"><g transform="translate(8.00,8.00) scale(0.52)" style="color:#a82828" stroke="#a82828" fill="#a82828" stroke-width="2.0" stroke-linecap="round" stroke-linejoin="round"><circle cx="0" cy="0" r="8.9" fill="none"/><circle cx="0" cy="0" r="1.4" stroke="none" fill="currentColor"/></g></svg>
<div class="t num" style="left:660px;width:37px;text-align:right;top:134px">16</div>
<svg class="g" style="left:696.5px;top:134px" width="12" height="16"><g transform="translate(6.00,8.00) scale(0.5)" style="color:#b8202c" stroke="#b8202c" fill="#b8202c" stroke-width="2.3" stroke-linecap="round" stroke-linejoin="round"><circle cx="-6" cy="2.5" r="3.2" fill="none"/><path d="M-3,2.8 C-5.5,-3 -3,-9.5 2,-9.5 C7,-9.5 7.5,-4 5,1 C3,5 3,8.5 6,9.3 C8,9.7 9,8.5 9.5,7.5" fill="none"/></g></svg>
<div class="t num" style="left:708px;top:134px">20</div>
<svg class="g" style="left:657px;top:150px" width="16" height="16"><g transform="translate(8.00,8.00) scale(0.52)" style="color:#1e2a9a" stroke="#1e2a9a" fill="#1e2a9a" stroke-width="2.0" stroke-linecap="round" stroke-linejoin="round"><path d="M-7,-9.8 C3,-10 7.3,-5 7.3,0 C7.3,5 3,10 -7.5,9.8 C-1.5,7.5 2.2,4 2.2,0 C2.2,-4 -1.5,-7.5 -7,-9.8 Z" fill="none"/></g></svg>
<div class="t num" style="left:660px;width:37px;text-align:right;top:150px">12</div>
<svg class="g" style="left:696.5px;top:150px" width="12" height="16"><g transform="translate(6.00,8.00) scale(0.5)" style="color:#1e2a9a" stroke="#1e2a9a" fill="#1e2a9a" stroke-width="2.3" stroke-linecap="round" stroke-linejoin="round"><path d="M-10.6,9.5 V-4.5 C-10.6,-8 -9,-9.3 -7.1,-9.3 C-5.2,-9.3 -3.6,-8 -3.6,-4.5 V9.5 M-3.6,-4.5 C-3.6,-8 -2,-9.3 -0.1,-9.3 C1.8,-9.3 3.4,-8 3.4,-4.5 V6 C3.4,9.5 5,10 6.5,9 C8,8 9,6 9.7,4" fill="none"/><path d="M10.5,2.5 L6.8,4.8 L10.2,6.8 Z" stroke-width="1.2"/></g></svg>
<div class="t num" style="left:708px;top:150px">46</div>
<svg class="g" style="left:657px;top:166px" width="16" height="16"><g transform="translate(8.00,8.00) scale(0.52)" style="color:#6a2fe0" stroke="#6a2fe0" fill="#6a2fe0" stroke-width="2.0" stroke-linecap="round" stroke-linejoin="round"><circle cx="0" cy="-1.7" r="4.6" fill="none"/><path d="M-5,-10 C-4,-7 -2.5,-6.3 0,-6.3 C2.5,-6.3 4,-7 5,-10 M0,3 V10 M-3.5,6.8 H3.5" fill="none"/></g></svg>
<div class="t num" style="left:660px;width:37px;text-align:right;top:166px">26</div>
<svg class="g" style="left:696.5px;top:166px" width="12" height="16"><g transform="translate(6.00,8.00) scale(0.5)" style="color:#b8202c" stroke="#b8202c" fill="#b8202c" stroke-width="2.3" stroke-linecap="round" stroke-linejoin="round"><circle cx="-6" cy="2.5" r="3.2" fill="none"/><path d="M-3,2.8 C-5.5,-3 -3,-9.5 2,-9.5 C7,-9.5 7.5,-4 5,1 C3,5 3,8.5 6,9.3 C8,9.7 9,8.5 9.5,7.5" fill="none"/></g></svg>
<div class="t num" style="left:708px;top:166px">25</div>
<svg class="g" style="left:657px;top:182px" width="16" height="16"><g transform="translate(8.00,8.00) scale(0.52)" style="color:#8f8f4c" stroke="#8f8f4c" fill="#8f8f4c" stroke-width="2.0" stroke-linecap="round" stroke-linejoin="round"><circle cx="0" cy="-3.7" r="5.5" fill="none"/><path d="M0,1.8 V9.8 M-4.3,5 H4.3" fill="none"/></g></svg>
<div class="t num" style="left:660px;width:37px;text-align:right;top:182px">2</div>
<svg class="g" style="left:696.5px;top:182px" width="12" height="16"><g transform="translate(6.00,8.00) scale(0.5)" style="color:#8f8f4c" stroke="#8f8f4c" fill="#8f8f4c" stroke-width="2.3" stroke-linecap="round" stroke-linejoin="round"><path d="M-9.75,9.9 V-5 C-9.75,-8 -8,-9 -6.2,-9 C-4.5,-9 -2.7,-8 -2.7,-5 V9.9 M-2.7,-5 C-2.7,-8 -1,-9 0.8,-9 C2.5,-9 4.3,-8 4.3,-5 V9.9 M4.3,-5 C4.3,-8 6,-9 8,-9 C10,-9 11,-7 10.5,-4 C10,0 7,5 0.5,9.9" fill="none"/></g></svg>
<div class="t num" style="left:708px;top:182px">53</div>
<svg class="g" style="left:657px;top:198px" width="16" height="16"><g transform="translate(8.00,8.00) scale(0.52)" style="color:#b8202c" stroke="#b8202c" fill="#b8202c" stroke-width="2.0" stroke-linecap="round" stroke-linejoin="round"><circle cx="-2.3" cy="2.6" r="6.2" fill="none"/><path d="M2.2,-1.9 L8.5,-8.2" fill="none"/><path d="M10,-9.8 L3.2,-8 L8.2,-3 Z" stroke-width="1"/></g></svg>
<div class="t num" style="left:660px;width:37px;text-align:right;top:198px">23</div>
<svg class="g" style="left:696.5px;top:198px" width="12" height="16"><g transform="translate(6.00,8.00) scale(0.5)" style="color:#8f8f4c" stroke="#8f8f4c" fill="#8f8f4c" stroke-width="2.3" stroke-linecap="round" stroke-linejoin="round"><path d="M-9.75,9.9 V-5 C-9.75,-8 -8,-9 -6.2,-9 C-4.5,-9 -2.7,-8 -2.7,-5 V9.9 M-2.7,-5 C-2.7,-8 -1,-9 0.8,-9 C2.5,-9 4.3,-8 4.3,-5 V9.9 M4.3,-5 C4.3,-8 6,-9 8,-9 C10,-9 11,-7 10.5,-4 C10,0 7,5 0.5,9.9" fill="none"/></g></svg>
<div class="t num" style="left:708px;top:198px">07</div>
<svg class="g" style="left:657px;top:214px" width="16" height="16"><g transform="translate(8.00,8.00) scale(0.52)" style="color:#b8202c" stroke="#b8202c" fill="#b8202c" stroke-width="2.0" stroke-linecap="round" stroke-linejoin="round"><path d="M-7.5,-4.5 C-7.5,-9 -1.2,-10 -1.2,-5.2 C-1.2,-1.5 -4.5,2.5 -7.5,5.2 H7.5 M4,-9.5 V9.5" fill="none"/></g></svg>
<div class="t" style="left:669.5px;top:218px;font-size:8.5px;line-height:10px;color:#3a3a6a;transform:scaleX(0.9);transform-origin:0 0">R</div>
<div class="t num" style="left:660px;width:37px;text-align:right;top:214px">13</div>
<svg class="g" style="left:696.5px;top:214px" width="12" height="16"><g transform="translate(6.00,8.00) scale(0.5)" style="color:#8f8f4c" stroke="#8f8f4c" fill="#8f8f4c" stroke-width="2.3" stroke-linecap="round" stroke-linejoin="round"><path d="M-7.5,-7 C-5,-8.5 -3,-8 0,-8.5 L7,-9 L-6.8,3.8" fill="none"/><circle cx="2" cy="3.3" r="4.8" fill="none"/></g></svg>
<div class="t num" style="left:708px;top:214px">59</div>
<svg class="g" style="left:657px;top:230px" width="16" height="16"><g transform="translate(8.00,8.00) scale(0.52)" style="color:#8f8f4c" stroke="#8f8f4c" fill="#8f8f4c" stroke-width="2.0" stroke-linecap="round" stroke-linejoin="round"><path d="M-5,-10.5 V10.5 M-7.8,-6.8 H-1.8 M-5,2 C-3,-2.5 4,-3 4,2 C4,5 1.8,6.5 2.5,8.8 C3.2,11 6,10.5 7,9.5" fill="none"/></g></svg>
<div class="t num" style="left:660px;width:37px;text-align:right;top:230px">8</div>
<svg class="g" style="left:696.5px;top:230px" width="12" height="16"><g transform="translate(6.00,8.00) scale(0.5)" style="color:#8f8f4c" stroke="#8f8f4c" fill="#8f8f4c" stroke-width="2.3" stroke-linecap="round" stroke-linejoin="round"><path d="M-9.75,9.9 V-5 C-9.75,-8 -8,-9 -6.2,-9 C-4.5,-9 -2.7,-8 -2.7,-5 V9.9 M-2.7,-5 C-2.7,-8 -1,-9 0.8,-9 C2.5,-9 4.3,-8 4.3,-5 V9.9 M4.3,-5 C4.3,-8 6,-9 8,-9 C10,-9 11,-7 10.5,-4 C10,0 7,5 0.5,9.9" fill="none"/></g></svg>
<div class="t num" style="left:708px;top:230px">38</div>
<svg class="g" style="left:657px;top:246px" width="16" height="16"><g transform="translate(8.00,8.00) scale(0.52)" style="color:#6a2fe0" stroke="#6a2fe0" fill="#6a2fe0" stroke-width="2.0" stroke-linecap="round" stroke-linejoin="round"><path d="M-6.5,-9 V4 M6.5,-9 V4 M-6.5,-1.8 H6.5 M0,-6.5 V4.3" fill="none"/><circle cx="0" cy="7" r="2.6" fill="none"/></g></svg>
<div class="t" style="left:669.5px;top:250px;font-size:8.5px;line-height:10px;color:#3a3a6a;transform:scaleX(0.9);transform-origin:0 0">R</div>
<div class="t num" style="left:660px;width:37px;text-align:right;top:246px">21</div>
<svg class="g" style="left:696.5px;top:246px" width="12" height="16"><g transform="translate(6.00,8.00) scale(0.5)" style="color:#1e2a9a" stroke="#1e2a9a" fill="#1e2a9a" stroke-width="2.3" stroke-linecap="round" stroke-linejoin="round"><path d="M-8,-10 C-1.2,-5 -1.2,5 -8,10 M8,-10 C1.2,-5 1.2,5 8,10 M-5.5,0 H5.5" fill="none"/></g></svg>
<div class="t num" style="left:708px;top:246px">59</div>
<svg class="g" style="left:657px;top:262px" width="16" height="16"><g transform="translate(8.00,8.00) scale(0.52)" style="color:#1e2a9a" stroke="#1e2a9a" fill="#1e2a9a" stroke-width="2.0" stroke-linecap="round" stroke-linejoin="round"><path d="M-8.5,-7.5 C-8.5,0.5 -4,3.5 0,3.5 C4,3.5 8.5,0.5 8.5,-7.5 M0,-9 V9.8 M-4.2,5.8 H4.2 M-10.3,-5.5 L-8.5,-9.5 L-6.7,-5.5 M-1.8,-6.8 L0,-9.8 L1.8,-6.8 M6.7,-5.5 L8.5,-9.5 L10.3,-5.5" fill="none"/></g></svg>
<div class="t" style="left:669.5px;top:266px;font-size:8.5px;line-height:10px;color:#3a3a6a;transform:scaleX(0.9);transform-origin:0 0">R</div>
<div class="t num" style="left:660px;width:37px;text-align:right;top:262px">23</div>
<svg class="g" style="left:696.5px;top:262px" width="12" height="16"><g transform="translate(6.00,8.00) scale(0.5)" style="color:#6a2fe0" stroke="#6a2fe0" fill="#6a2fe0" stroke-width="2.3" stroke-linecap="round" stroke-linejoin="round"><path d="M-11,-1.5 L-6.5,-6 L-2.5,-2 L1.5,-6 L5.5,-2 L9.5,-6 L11,-4.5 M-11,6 L-6.5,1.5 L-2.5,5.5 L1.5,1.5 L5.5,5.5 L9.5,1.5 L11,3" fill="none"/></g></svg>
<div class="t num" style="left:708px;top:262px">02</div>
<svg class="g" style="left:657px;top:278px" width="16" height="16"><g transform="translate(8.00,8.00) scale(0.52)" style="color:#1e2a9a" stroke="#1e2a9a" fill="#1e2a9a" stroke-width="2.0" stroke-linecap="round" stroke-linejoin="round"><path d="M-8,-9.5 C-8,-3 -4.5,-0.5 0,-0.5 C4.5,-0.5 8,-3 8,-9.5 M0,-0.5 V9.8 M-4,5.5 H4" fill="none"/><circle cx="0" cy="-6.3" r="3" fill="none"/></g></svg>
<div class="t" style="left:669.5px;top:282px;font-size:8.5px;line-height:10px;color:#3a3a6a;transform:scaleX(0.9);transform-origin:0 0">R</div>
<div class="t num" style="left:660px;width:37px;text-align:right;top:278px">28</div>
<svg class="g" style="left:696.5px;top:278px" width="12" height="16"><g transform="translate(6.00,8.00) scale(0.5)" style="color:#b8202c" stroke="#b8202c" fill="#b8202c" stroke-width="2.3" stroke-linecap="round" stroke-linejoin="round"><path d="M-9.5,9.5 L8.5,-8.5 M-5.5,0 L1,6.5" fill="none"/><path d="M10,-10 L2.8,-8 L8,-2.8 Z" stroke-width="1"/></g></svg>
<div class="t num" style="left:708px;top:278px">45</div>
<div class="t" style="left:658px;top:294px;font-size:12px;transform:scaleX(0.72);transform-origin:0 0;color:#222;letter-spacing:-0.5px">Asc</div>
<div class="t num" style="left:660px;width:37px;text-align:right;top:294px">9</div>
<svg class="g" style="left:696.5px;top:294px" width="12" height="16"><g transform="translate(6.00,8.00) scale(0.5)" style="color:#1e2a9a" stroke="#1e2a9a" fill="#1e2a9a" stroke-width="2.3" stroke-linecap="round" stroke-linejoin="round"><path d="M-10.6,9.5 V-4.5 C-10.6,-8 -9,-9.3 -7.1,-9.3 C-5.2,-9.3 -3.6,-8 -3.6,-4.5 V9.5 M-3.6,-4.5 C-3.6,-8 -2,-9.3 -0.1,-9.3 C1.8,-9.3 3.4,-8 3.4,-4.5 V6 C3.4,9.5 5,10 6.5,9 C8,8 9,6 9.7,4" fill="none"/><path d="M10.5,2.5 L6.8,4.8 L10.2,6.8 Z" stroke-width="1.2"/></g></svg>
<div class="t num" style="left:708px;top:294px">36</div>
<div class="t" style="left:658px;top:310px;font-size:13px;transform:scaleX(0.78);transform-origin:0 0;color:#222">Mc</div>
<div class="t num" style="left:660px;width:37px;text-align:right;top:310px">24</div>
<svg class="g" style="left:696.5px;top:310px" width="12" height="16"><g transform="translate(6.00,8.00) scale(0.5)" style="color:#b8202c" stroke="#b8202c" fill="#b8202c" stroke-width="2.3" stroke-linecap="round" stroke-linejoin="round"><circle cx="-6" cy="2.5" r="3.2" fill="none"/><path d="M-3,2.8 C-5.5,-3 -3,-9.5 2,-9.5 C7,-9.5 7.5,-4 5,1 C3,5 3,8.5 6,9.3 C8,9.7 9,8.5 9.5,7.5" fill="none"/></g></svg>
<div class="t num" style="left:708px;top:310px">08</div>
<svg class="g" style="left:657px;top:326px" width="16" height="16"><g transform="translate(8.00,8.00) scale(0.52)" style="color:#111" stroke="#111" fill="#111" stroke-width="2.0" stroke-linecap="round" stroke-linejoin="round"><path d="M-3.2,7.5 C-9,2 -8.5,-10 0,-10 C8.5,-10 9,2 3.2,7.5" fill="none"/><circle cx="-5.3" cy="7.3" r="2.5" fill="none"/><circle cx="5.3" cy="7.3" r="2.5" fill="none"/></g></svg>
<div class="t" style="left:669.5px;top:330px;font-size:8.5px;line-height:10px;color:#3a3a6a;transform:scaleX(0.9);transform-origin:0 0">R</div>
<div class="t num" style="left:660px;width:37px;text-align:right;top:326px">18</div>
<svg class="g" style="left:696.5px;top:326px" width="12" height="16"><g transform="translate(6.00,8.00) scale(0.5)" style="color:#6a2fe0" stroke="#6a2fe0" fill="#6a2fe0" stroke-width="2.3" stroke-linecap="round" stroke-linejoin="round"><path d="M-11,-1.5 L-6.5,-6 L-2.5,-2 L1.5,-6 L5.5,-2 L9.5,-6 L11,-4.5 M-11,6 L-6.5,1.5 L-2.5,5.5 L1.5,1.5 L5.5,5.5 L9.5,1.5 L11,3" fill="none"/></g></svg>
<div class="t num" style="left:708px;top:326px">40</div>
<svg class="g" style="left:657px;top:342px" width="16" height="16"><g transform="translate(8.00,8.00) scale(0.52)" style="color:#3040c0" stroke="#3040c0" fill="#3040c0" stroke-width="2.0" stroke-linecap="round" stroke-linejoin="round"><path d="M4.5,-10 C-2,-10 -6,-6.5 -6,-3.2 C-6,0.5 -2,3 4.5,3 C0,1.5 -1.8,-1 -1.8,-3.5 C-1.8,-6 0,-8.5 4.5,-10 Z M-0.5,3 V9.8 M-3.8,6.5 H3" fill="none"/></g></svg>
<div class="t num" style="left:660px;width:37px;text-align:right;top:342px">13</div>
<svg class="g" style="left:696.5px;top:342px" width="12" height="16"><g transform="translate(6.00,8.00) scale(0.5)" style="color:#b8202c" stroke="#b8202c" fill="#b8202c" stroke-width="2.3" stroke-linecap="round" stroke-linejoin="round"><path d="M-9.5,9.5 L8.5,-8.5 M-5.5,0 L1,6.5" fill="none"/><path d="M10,-10 L2.8,-8 L8,-2.8 Z" stroke-width="1"/></g></svg>
<div class="t num" style="left:708px;top:342px">29</div>
<svg class="g" style="left:657px;top:358px" width="16" height="16"><g transform="translate(8.00,8.00) scale(0.52)" style="color:#111" stroke="#111" fill="#111" stroke-width="2.0" stroke-linecap="round" stroke-linejoin="round"><circle cx="0" cy="0" r="8" fill="none"/><path d="M-9.8,0 H9.8 M0,-9.8 V9.8" fill="none"/></g></svg>
<div class="t num" style="left:660px;width:37px;text-align:right;top:358px">6</div>
<svg class="g" style="left:696.5px;top:358px" width="12" height="16"><g transform="translate(6.00,8.00) scale(0.5)" style="color:#6a2fe0" stroke="#6a2fe0" fill="#6a2fe0" stroke-width="2.3" stroke-linecap="round" stroke-linejoin="round"><path d="M-11,-1.5 L-6.5,-6 L-2.5,-2 L1.5,-6 L5.5,-2 L9.5,-6 L11,-4.5 M-11,6 L-6.5,1.5 L-2.5,5.5 L1.5,1.5 L5.5,5.5 L9.5,1.5 L11,3" fill="none"/></g></svg>
<div class="t num" style="left:708px;top:358px">02</div>
<div class="t hn" style="left:620px;width:53px;text-align:right;top:374px">1.</div>
<div class="t hn" style="left:660px;width:37px;text-align:right;top:374px">9</div>
<svg class="g" style="left:696.5px;top:374px" width="12" height="16"><g transform="translate(6.00,8.00) scale(0.5)" style="color:#1e2a9a" stroke="#1e2a9a" fill="#1e2a9a" stroke-width="2.3" stroke-linecap="round" stroke-linejoin="round"><path d="M-10.6,9.5 V-4.5 C-10.6,-8 -9,-9.3 -7.1,-9.3 C-5.2,-9.3 -3.6,-8 -3.6,-4.5 V9.5 M-3.6,-4.5 C-3.6,-8 -2,-9.3 -0.1,-9.3 C1.8,-9.3 3.4,-8 3.4,-4.5 V6 C3.4,9.5 5,10 6.5,9 C8,8 9,6 9.7,4" fill="none"/><path d="M10.5,2.5 L6.8,4.8 L10.2,6.8 Z" stroke-width="1.2"/></g></svg>
<div class="t hn" style="left:708px;top:374px">36</div>
<div class="t hn" style="left:620px;width:53px;text-align:right;top:390px">2.</div>
<div class="t hn" style="left:660px;width:37px;text-align:right;top:390px">8</div>
<svg class="g" style="left:696.5px;top:390px" width="12" height="16"><g transform="translate(6.00,8.00) scale(0.5)" style="color:#b8202c" stroke="#b8202c" fill="#b8202c" stroke-width="2.3" stroke-linecap="round" stroke-linejoin="round"><path d="M-9.5,9.5 L8.5,-8.5 M-5.5,0 L1,6.5" fill="none"/><path d="M10,-10 L2.8,-8 L8,-2.8 Z" stroke-width="1"/></g></svg>
<div class="t hn" style="left:708px;top:390px">12</div>
<div class="t hn" style="left:620px;width:53px;text-align:right;top:406px">3.</div>
<div class="t hn" style="left:660px;width:37px;text-align:right;top:406px">14</div>
<svg class="g" style="left:696.5px;top:406px" width="12" height="16"><g transform="translate(6.00,8.00) scale(0.5)" style="color:#8f8f4c" stroke="#8f8f4c" fill="#8f8f4c" stroke-width="2.3" stroke-linecap="round" stroke-linejoin="round"><path d="M-7.5,-7 C-5,-8.5 -3,-8 0,-8.5 L7,-9 L-6.8,3.8" fill="none"/><circle cx="2" cy="3.3" r="4.8" fill="none"/></g></svg>
<div class="t hn" style="left:708px;top:406px">39</div>
<div class="t hn" style="left:620px;width:53px;text-align:right;top:422px">4.</div>
<div class="t hn" style="left:660px;width:37px;text-align:right;top:422px">24</div>
<svg class="g" style="left:696.5px;top:422px" width="12" height="16"><g transform="translate(6.00,8.00) scale(0.5)" style="color:#6a2fe0" stroke="#6a2fe0" fill="#6a2fe0" stroke-width="2.3" stroke-linecap="round" stroke-linejoin="round"><path d="M-11,-1.5 L-6.5,-6 L-2.5,-2 L1.5,-6 L5.5,-2 L9.5,-6 L11,-4.5 M-11,6 L-6.5,1.5 L-2.5,5.5 L1.5,1.5 L5.5,5.5 L9.5,1.5 L11,3" fill="none"/></g></svg>
<div class="t hn" style="left:708px;top:422px">08</div>
<div class="t hn" style="left:620px;width:53px;text-align:right;top:438px">5.</div>
<div class="t hn" style="left:660px;width:37px;text-align:right;top:438px">26</div>
<svg class="g" style="left:696.5px;top:438px" width="12" height="16"><g transform="translate(6.00,8.00) scale(0.5)" style="color:#1e2a9a" stroke="#1e2a9a" fill="#1e2a9a" stroke-width="2.3" stroke-linecap="round" stroke-linejoin="round"><path d="M-8,-10 C-1.2,-5 -1.2,5 -8,10 M8,-10 C1.2,-5 1.2,5 8,10 M-5.5,0 H5.5" fill="none"/></g></svg>
<div class="t hn" style="left:708px;top:438px">43</div>
<div class="t hn" style="left:620px;width:53px;text-align:right;top:454px">6.</div>
<div class="t hn" style="left:660px;width:37px;text-align:right;top:454px">21</div>
<svg class="g" style="left:696.5px;top:454px" width="12" height="16"><g transform="translate(6.00,8.00) scale(0.5)" style="color:#b8202c" stroke="#b8202c" fill="#b8202c" stroke-width="2.3" stroke-linecap="round" stroke-linejoin="round"><path d="M-1,9.5 V-3 C-1,-7 -3,-9.5 -6,-9.5 C-8.5,-9.5 -10,-7.5 -10,-5 C-10,-3 -9,-1.5 -8,-0.5 M-1,-3 C-1,-7 1,-9.5 4,-9.5 C6.5,-9.5 8,-7.5 8,-5 C8,-3 7,-1.5 6,-0.5" fill="none"/></g></svg>
<div class="t hn" style="left:708px;top:454px">04</div>
<div class="t hn" style="left:620px;width:53px;text-align:right;top:470px">7.</div>
<div class="t hn" style="left:660px;width:37px;text-align:right;top:470px">9</div>
<svg class="g" style="left:696.5px;top:470px" width="12" height="16"><g transform="translate(6.00,8.00) scale(0.5)" style="color:#8f8f4c" stroke="#8f8f4c" fill="#8f8f4c" stroke-width="2.3" stroke-linecap="round" stroke-linejoin="round"><circle cx="0" cy="3" r="6.2" fill="none"/><path d="M-8,-9.5 C-6,-9.5 -5,-3.2 0,-3.2 C5,-3.2 6,-9.5 8,-9.5" fill="none"/></g></svg>
<div class="t hn" style="left:708px;top:470px">36</div>
<div class="t hn" style="left:620px;width:53px;text-align:right;top:486px">8.</div>
<div class="t hn" style="left:660px;width:37px;text-align:right;top:486px">8</div>
<svg class="g" style="left:696.5px;top:486px" width="12" height="16"><g transform="translate(6.00,8.00) scale(0.5)" style="color:#6a2fe0" stroke="#6a2fe0" fill="#6a2fe0" stroke-width="2.3" stroke-linecap="round" stroke-linejoin="round"><path d="M-7.5,-9 H7.5 M-7.5,9 H7.5 M-3.5,-9 V9 M3.5,-9 V9" fill="none"/></g></svg>
<div class="t hn" style="left:708px;top:486px">12</div>
<div class="t hn" style="left:620px;width:53px;text-align:right;top:502px">9.</div>
<div class="t hn" style="left:660px;width:37px;text-align:right;top:502px">14</div>
<svg class="g" style="left:696.5px;top:502px" width="12" height="16"><g transform="translate(6.00,8.00) scale(0.5)" style="color:#1e2a9a" stroke="#1e2a9a" fill="#1e2a9a" stroke-width="2.3" stroke-linecap="round" stroke-linejoin="round"><path d="M-5.8,-8.2 C0,-8.6 6,-8.6 10.5,-6 M5.8,8.2 C0,8.6 -6,8.6 -10.5,6" fill="none"/><circle cx="-5.8" cy="-4" r="4.2" fill="none"/><circle cx="5.8" cy="4" r="4.2" fill="none"/></g></svg>
<div class="t hn" style="left:708px;top:502px">39</div>
<div class="t hn" style="left:620px;width:53px;text-align:right;top:518px">10.</div>
<div class="t hn" style="left:660px;width:37px;text-align:right;top:518px">24</div>
<svg class="g" style="left:696.5px;top:518px" width="12" height="16"><g transform="translate(6.00,8.00) scale(0.5)" style="color:#b8202c" stroke="#b8202c" fill="#b8202c" stroke-width="2.3" stroke-linecap="round" stroke-linejoin="round"><circle cx="-6" cy="2.5" r="3.2" fill="none"/><path d="M-3,2.8 C-5.5,-3 -3,-9.5 2,-9.5 C7,-9.5 7.5,-4 5,1 C3,5 3,8.5 6,9.3 C8,9.7 9,8.5 9.5,7.5" fill="none"/></g></svg>
<div class="t hn" style="left:708px;top:518px">08</div>
<div class="t hn" style="left:620px;width:53px;text-align:right;top:534px">11.</div>
<div class="t hn" style="left:660px;width:37px;text-align:right;top:534px">26</div>
<svg class="g" style="left:696.5px;top:534px" width="12" height="16"><g transform="translate(6.00,8.00) scale(0.5)" style="color:#8f8f4c" stroke="#8f8f4c" fill="#8f8f4c" stroke-width="2.3" stroke-linecap="round" stroke-linejoin="round"><path d="M-9.75,9.9 V-5 C-9.75,-8 -8,-9 -6.2,-9 C-4.5,-9 -2.7,-8 -2.7,-5 V9.9 M-2.7,-5 C-2.7,-8 -1,-9 0.8,-9 C2.5,-9 4.3,-8 4.3,-5 V9.9 M4.3,-5 C4.3,-8 6,-9 8,-9 C10,-9 11,-7 10.5,-4 C10,0 7,5 0.5,9.9" fill="none"/></g></svg>
<div class="t hn" style="left:708px;top:534px">43</div>
<div class="t hn" style="left:620px;width:53px;text-align:right;top:550px">12.</div>
<div class="t hn" style="left:660px;width:37px;text-align:right;top:550px">21</div>
<svg class="g" style="left:696.5px;top:550px" width="12" height="16"><g transform="translate(6.00,8.00) scale(0.5)" style="color:#6a2fe0" stroke="#6a2fe0" fill="#6a2fe0" stroke-width="2.3" stroke-linecap="round" stroke-linejoin="round"><path d="M-11,7 H11 M-11,2 H-4 C-6.5,-0.5 -5,-7 0,-7 C5,-7 6.5,-0.5 4,2 H11" fill="none"/></g></svg>
<div class="t hn" style="left:708px;top:550px">04</div>
<svg class="abs" style="left:0;top:0" width="1024" height="768">
<g fill="none" stroke="#8e8e8e" stroke-width="1.2" stroke-linejoin="miter">
<path d="M970.1,675.8 L940.9,704.1 L969.7,733.3"/>
<path d="M977.6,674.9 L1003.3,700.1"/>
<path d="M969,677 L977.6,674.9 L968.5,684"/>
<path d="M970.1,675.8 L1006,705 L997.1,714.7"/>
<path d="M965.2,686 L981.2,693.9 L962.6,690.8 Z"/>
<path d="M958.1,693 L998,703.7 L956.4,697.5 Z"/>
<path d="M950.6,700 L972.3,708.5 L949.3,703.5 Z"/>
<path d="M951.5,707.2 L993,718.3 L974.3,733.6"/>
<path d="M960.8,718.3 L994,715.8 M960.8,718.3 L984,724 L978.5,731"/>
<path d="M1003.3,700.1 L998,703.7 L990,711"/>
</g>
<text x="0" y="0" transform="translate(943.8,744.7) scale(0.855,1)" font-family="Liberation Sans, sans-serif" font-size="11.3" fill="#8c8c8c">INSTALUJ.CZ</text>
</svg>
<div id="status"><div class="s" style="left:2px;top:3px;transform:scaleX(0.93);transform-origin:0 0">Ready</div><div class="abs" style="left:959px;top:1px;width:31px;height:14px;border-left:1px solid #cbc8b8;border-right:1px solid #cbc8b8"></div><div class="s" style="left:964.6px;transform:scaleX(0.86);transform-origin:0 0">NUM</div><div class="abs" style="left:1021px;top:1px;width:1px;height:14px;background:#cbc8b8"></div></div>
<div id="bottom"></div>
</body></html>
